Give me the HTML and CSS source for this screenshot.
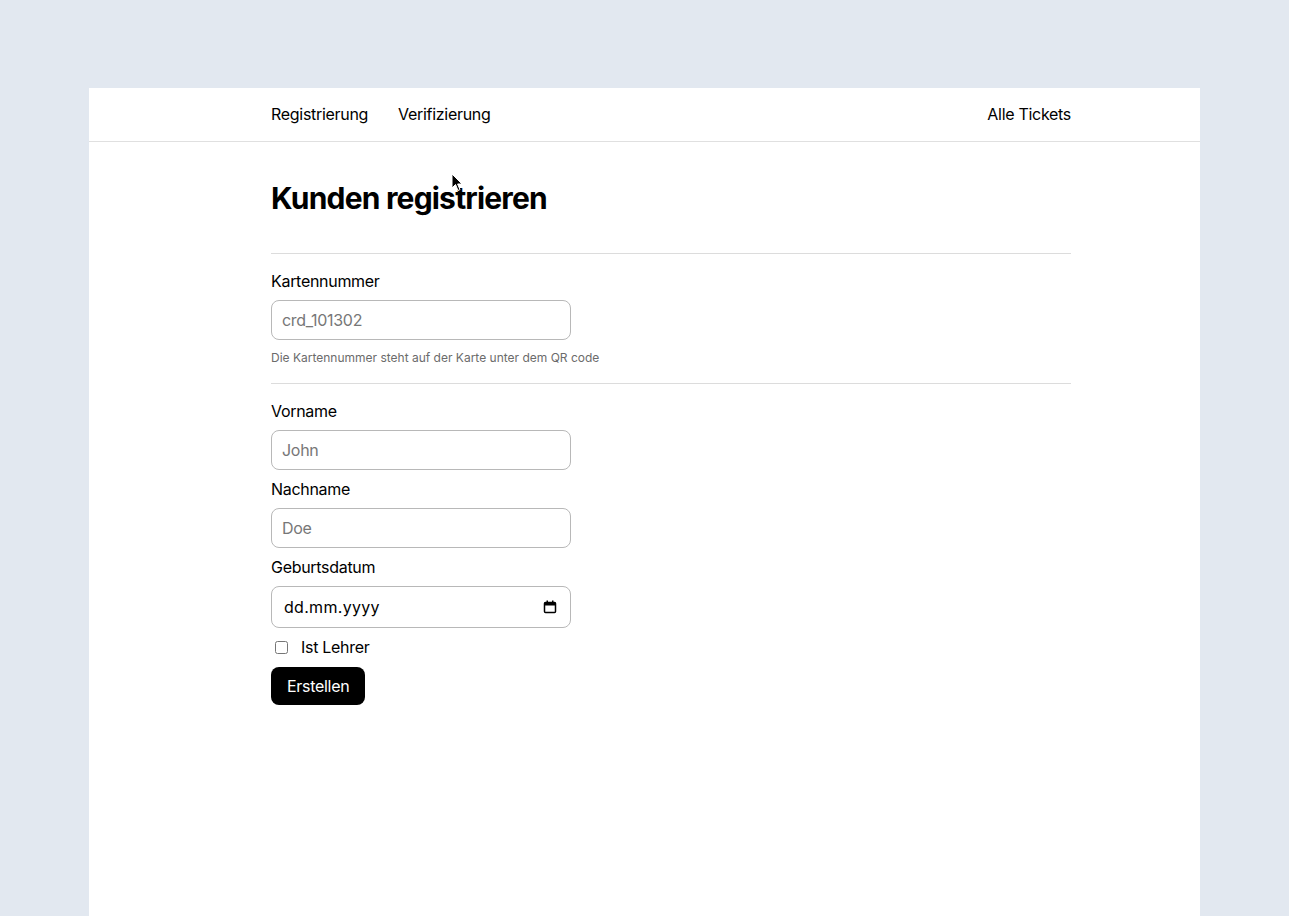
FILE: index.html
```html
<!DOCTYPE html>
<html lang="de">
<head>
<meta charset="utf-8">
<title>Kunden registrieren</title>
<link rel="stylesheet" href="styles.css">
</head>
<body>
<div class="panel">
  <nav class="nav">
    <div class="nav-inner">
      <div class="nav-left">
        <a class="nav-link" href="#">Registrierung</a>
        <a class="nav-link" href="#">Verifizierung</a>
      </div>
      <a class="nav-link" href="#">Alle Tickets</a>
    </div>
  </nav>
  <main class="main">
    <h1 class="title">Kunden registrieren</h1>
    <hr class="rule">
    <section class="group">
      <label class="label" for="card">Kartennummer</label>
      <input class="input" id="card" type="text" placeholder="crd_101302">
      <p class="help">Die Kartennummer steht auf der Karte unter dem QR code</p>
    </section>
    <hr class="rule">
    <section class="fields">
      <label class="label" for="first">Vorname</label>
      <input class="input" id="first" type="text" placeholder="John">
      <label class="label" for="last">Nachname</label>
      <input class="input" id="last" type="text" placeholder="Doe">
      <label class="label" for="dob">Geburtsdatum</label>
      <div class="input date">
        <span>dd.mm.yyyy</span>
        <svg class="cal" width="14" height="14" viewBox="0 0 14 14"><rect x="1.5" y="2.5" width="11" height="10" rx="1" fill="none" stroke="#000" stroke-width="1.5"/><rect x="1.5" y="2.5" width="11" height="3" fill="#000"/><rect x="3.5" y="0.5" width="1.5" height="2.5" fill="#000"/><rect x="9" y="0.5" width="1.5" height="2.5" fill="#000"/></svg>
      </div>
      <label class="check"><input type="checkbox" class="box"> Ist Lehrer</label>
      <button class="btn" type="button">Erstellen</button>
    </section>
  </main>
  <svg class="cursor" width="12" height="20" viewBox="0 0 12 20"><path d="M1 1 L1 15 L4.5 11.5 L7 17.5 L9 16.6 L6.6 11 L11 11 Z" fill="#000" stroke="#fff" stroke-width="1"/></svg>
</div>
</body>
</html>
```
FILE: styles.css
```css
* { box-sizing: border-box; }
html, body { margin: 0; padding: 0; }
body {
  background: #e2e8f0;
  font-family: Inter, "Noto Sans", sans-serif;
  color: #000;
  padding: 88px 89px 0 89px;
  height: 916px;
  overflow: hidden;
  letter-spacing: -0.3px;
}
.panel {
  position: relative;
  background: #fff;
  height: 828px;
}
.nav {
  height: 54px;
  border-bottom: 1px solid #e0e0e0;
}
.nav-inner {
  margin-left: 182px;
  width: 800px;
  height: 51px;
  display: flex;
  align-items: center;
  justify-content: space-between;
}
.nav-left { display: flex; gap: 30px; }
.nav-link {
  color: #000;
  text-decoration: none;
  font-size: 16px;
  line-height: 20px;
}
.main {
  margin-left: 182px;
  width: 800px;
  padding-top: 38px;
}
.title {
  margin: 0;
  font-size: 30px;
  line-height: 36px;
  font-weight: 700;
  letter-spacing: -0.8px;
}
.rule {
  border: 0;
  border-top: 1px solid #dcdcdc;
  margin: 37px 0 17px;
}
.group + .rule { margin: 18px 0 17px; }
.label {
  display: block;
  font-size: 16px;
  line-height: 20px;
  margin-bottom: 9px;
}
.input {
  display: block;
  width: 300px;
  height: 40px;
  border: 1px solid #b8b8b8;
  border-radius: 8px;
  padding: 0 10px;
  font-family: inherit;
  font-size: 16px;
  letter-spacing: -0.3px;
  color: #000;
  margin: 0;
  outline: none;
}
.input::placeholder { color: #777; }
.fields .input { margin-bottom: 9px; }
.help {
  margin: 10px 0 0;
  font-size: 12px;
  line-height: 15px;
  color: #6b6b6b;
  letter-spacing: 0;
}
.date {
  height: 42px;
  display: flex;
  align-items: center;
  justify-content: space-between;
  padding: 0 13px 0 12px;
  letter-spacing: 0.3px;
}
.fields .date { margin-bottom: 9px; }
.cal { display: block; }
.check {
  display: flex;
  align-items: center;
  font-size: 16px;
  line-height: 20px;
  gap: 13px;
  margin: 0 0 10px;
}
.box {
  margin: 0 0 0 4px;
  width: 13px;
  height: 13px;
}
.btn {
  display: block;
  background: #000;
  color: #fff;
  border: 0;
  border-radius: 8px;
  height: 38px;
  padding: 0 16px;
  font-family: inherit;
  font-size: 16px;
  letter-spacing: -0.3px;
}
.cursor {
  position: absolute;
  left: 362px;
  top: 85px;
}
```
